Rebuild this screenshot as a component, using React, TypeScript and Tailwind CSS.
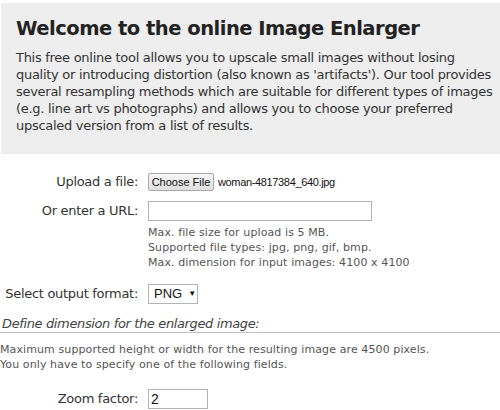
import React from "react";

const verdana = { fontFamily: '"DejaVu Sans", Verdana, sans-serif' };
const arial = { fontFamily: '"Liberation Sans", Arial, sans-serif' };

const FormRow = ({
  label,
  className,
  children,
}: {
  label: string;
  className?: string;
  children: React.ReactNode;
}) => {
  return (
    <div className={`flex h-[20px] items-center ${className ?? ""}`}>
      <label className="w-[138px] shrink-0 text-right text-[13px] tracking-[-0.3px] whitespace-nowrap text-[#333]">
        {label}
      </label>
      <div className="ml-[10px] flex items-center">{children}</div>
    </div>
  );
};

const App = () => {
  return (
    <div className="h-[410px] w-[500px] overflow-hidden bg-white" style={verdana}>
      <div className="mt-[3px] ml-px bg-[#eeeeee] pt-[14px] pr-[3px] pb-[20px] pl-[15px]">
        <h1 className="text-[19.5px] leading-[24px] font-bold tracking-[-0.5px] text-[#222]">
          Welcome to the online Image Enlarger
        </h1>
        <p className="mt-[8px] text-[13px] leading-[17px] tracking-[-0.28px] text-[#333]">
          This free online tool allows you to upscale small images without
          losing quality or introducing distortion (also known as
          'artifacts'). Our tool provides several resampling methods which are
          suitable for different types of images (e.g. line art vs
          photographs) and allows you to choose your preferred upscaled
          version from a list of results.
        </p>
      </div>

      <FormRow label="Upload a file:" className="mt-[18px]">
        <span
          className="flex h-[18px] w-[66px] items-center justify-center rounded-[2px] border border-[#a9a9a9] bg-gradient-to-b from-[#f6f6f6] to-[#dedede] text-[11px] text-[#111]"
          style={arial}
        >
          Choose File
        </span>
        <span className="ml-[4px] text-[11px] tracking-[-0.35px] text-[#111]" style={arial}>
          woman-4817384_640.jpg
        </span>
      </FormRow>

      <FormRow label="Or enter a URL:" className="mt-[9px]">
        <input
          type="text"
          className="h-[20px] w-[224px] border border-[#b4b4b4] bg-white outline-none"
        />
      </FormRow>

      <div className="mt-[4px] ml-[148px] text-[11px] leading-[15px] tracking-[0.1px] text-[#555]">
        <div>Max. file size for upload is 5 MB.</div>
        <div>Supported file types: jpg, png, gif, bmp.</div>
        <div>Max. dimension for input images: 4100 x 4100</div>
      </div>

      <FormRow label="Select output format:" className="mt-[14px]">
        <span
          className="flex h-[20px] w-[50px] items-center border border-[#b4b4b4] bg-white pl-[5px] text-[13px] text-[#111]"
          style={arial}
        >
          PNG
          <span className="ml-[6px] text-[8px]">▼</span>
        </span>
      </FormRow>

      <div className="mt-[12px] border-b border-[#c0c0c0] pl-[2px] text-[13px] leading-[16px] tracking-[-0.37px] text-[#444] italic">
        Define dimension for the enlarged image:
      </div>

      <div className="mt-[9px] text-[11px] leading-[15px] tracking-[0.1px] text-[#555]">
        <div>
          Maximum supported height or width for the resulting image are 4500
          pixels.
        </div>
        <div>You only have to specify one of the following fields.</div>
      </div>

      <FormRow label="Zoom factor:" className="mt-[17px]">
        <input
          type="text"
          defaultValue="2"
          className="h-[20px] w-[60px] border border-[#b4b4b4] bg-white px-[2px] text-[14px] text-[#111] outline-none"
          style={arial}
        />
      </FormRow>
    </div>
  );
};

export default App;
